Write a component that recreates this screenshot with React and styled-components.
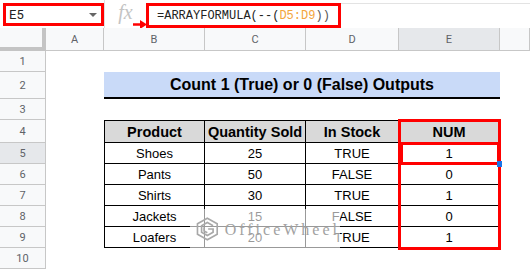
import React from "react";
import styled, { createGlobalStyle } from "styled-components";

const GlobalStyle = createGlobalStyle`
	html, body {
		margin: 0;
		background: #fff;
		font-family: "Liberation Sans", Arial, sans-serif;
		overflow: hidden;
	}
	* {
		box-sizing: border-box;
	}
`;

const Page = styled.div`
	position: relative;
	width: 530px;
	height: 270px;
`;

const TopBar = styled.div`
	display: flex;
	height: 28px;
`;

const NameBox = styled.div`
	display: flex;
	align-items: center;
	justify-content: space-between;
	margin: 3px 0 0 3px;
	width: 101px;
	height: 23px;
	padding: 0 4px 0 3px;
	border: 3px solid #f00;
	font-family: Roboto, "Liberation Sans", sans-serif;
	font-size: 13px;
	color: #222;
`;

const Caret = styled.span`
	width: 0;
	height: 0;
	border-left: 4px solid transparent;
	border-right: 4px solid transparent;
	border-top: 4px solid #666;
`;

const FxArea = styled.div`
	display: flex;
	align-items: center;
	justify-content: center;
	width: 42px;
	border-left: 1px solid #e0e0e0;
	font-family: "Liberation Serif", serif;
	font-style: italic;
	font-size: 20px;
	color: #c4c4c4;
	padding-bottom: 3px;
`;

const FormulaBox = styled.div`
	display: flex;
	align-items: center;
	margin-top: 3px;
	width: 195px;
	height: 25px;
	padding-left: 8px;
	border: 3px solid #f00;
	font-family: "Liberation Mono", "DejaVu Sans Mono", monospace;
	font-size: 12px;
	color: #222;
	white-space: pre;
`;

const Ref = styled.span`
	color: ${p => p.$color};
`;

const FormulaRest = styled.div`
	flex: 1;
	margin-top: 3px;
	border-top: 1px solid #e3e3e3;
`;

const Arrow = styled.svg`
	position: absolute;
	left: 133px;
	top: 20px;
`;

const Sheet = styled.div`
	position: relative;
`;

const SheetRow = styled.div`
	display: grid;
	grid-template-columns: 46px 58px 101px 101px 93px 101px 1fr;
	height: ${p => p.$h}px;
`;

const Corner = styled.div`
	background: #f8f9fa;
	border-right: 4px solid #c4c4c4;
	border-bottom: 4px solid #c4c4c4;
`;

const ColHead = styled.div`
	display: flex;
	align-items: center;
	justify-content: center;
	background: ${p => (p.$active ? "#e6e8eb" : "#f8f9fa")};
	border-right: 1px solid #c7c7c7;
	border-bottom: 1px solid #c7c7c7;
	font-family: Roboto, "Liberation Sans", sans-serif;
	font-size: 11px;
	color: #5f6368;
`;

const RowHead = styled(ColHead)``;

const Blank = styled.div``;

const TitleCell = styled.div`
	grid-column: 3 / span 4;
	display: flex;
	align-items: center;
	justify-content: center;
	background: #c9daf8;
	border-bottom: 2px solid #000;
	font-weight: 700;
	font-size: 16px;
	color: #000;
`;

const Cell = styled.div`
	display: flex;
	align-items: center;
	justify-content: center;
	background: ${p => (p.$head ? "#d9d9d9" : "#fff")};
	border-right: 1px solid #000;
	border-bottom: 1px solid #000;
	border-left: ${p => (p.$first ? "1px solid #000" : "none")};
	border-top: ${p => (p.$top ? "1px solid #000" : "none")};
	font-weight: ${p => (p.$head ? 700 : 400)};
	font-size: ${p => (p.$head ? "14.5px" : "13px")};
	color: #000;
`;

const Outline = styled.div`
	position: absolute;
	left: ${p => p.$x}px;
	top: ${p => p.$y}px;
	width: ${p => p.$w}px;
	height: ${p => p.$h}px;
	border: 3px solid #f00;
`;

const Handle = styled.div`
	position: absolute;
	left: 497px;
	top: 133px;
	width: 5px;
	height: 6px;
	background: #1a73e8;
`;

const Watermark = styled.div`
	position: absolute;
	left: 190px;
	top: 209px;
	width: 150px;
	height: 40px;
	display: flex;
	align-items: center;
	gap: 5px;
	padding-left: 5px;
	background: rgba(255, 255, 255, 0.6);
`;

const MarkText = styled.span`
	font-family: "Liberation Serif", serif;
	font-size: 16px;
	letter-spacing: 3px;
	color: #a2a2a2;
	padding-top: 2px;
`;

const columns = ["A", "B", "C", "D", "E"];

const data = [
	["Shoes", 25, "TRUE", 1],
	["Pants", 50, "FALSE", 0],
	["Shirts", 30, "TRUE", 1],
	["Jackets", 15, "FALSE", 0],
	["Loafers", 20, "TRUE", 1],
];

const TableRow = ({ n, values, head, top, active }) => (
	<SheetRow $h={head ? 23 : 21}>
		<RowHead $active={active}>{n}</RowHead>
		<Blank />
		{values.map((v, i) => (
			<Cell key={i} $head={head} $top={top} $first={i === 0}>
				{v}
			</Cell>
		))}
		<Blank />
	</SheetRow>
);

const EmptyRow = ({ n, h = 21 }) => (
	<SheetRow $h={h}>
		<RowHead>{n}</RowHead>
	</SheetRow>
);

const App = () => (
	<Page>
		<GlobalStyle />
		<TopBar>
			<NameBox>
				E5
				<Caret />
			</NameBox>
			<FxArea>fx</FxArea>
			<FormulaBox>
				=ARRAYFORMULA(--(<Ref $color="#f4a53c">D5:D9</Ref>
				<Ref $color="#555">))</Ref>
			</FormulaBox>
			<FormulaRest />
		</TopBar>
		<Arrow width="14" height="9" viewBox="0 0 14 9">
			<line x1="0" y1="4.5" x2="8" y2="4.5" stroke="#f00" strokeWidth="2.5" />
			<polygon points="7,0 14,4.5 7,9" fill="#f00" />
		</Arrow>

		<Sheet>
			<SheetRow $h={23}>
				<Corner />
				{columns.map(c => (
					<ColHead key={c} $active={c === "E"}>
						{c}
					</ColHead>
				))}
				<ColHead />
			</SheetRow>
			<EmptyRow n={1} />
			<SheetRow $h={27}>
				<RowHead>2</RowHead>
				<Blank />
				<TitleCell>Count 1 (True) or 0 (False) Outputs</TitleCell>
			</SheetRow>
			<EmptyRow n={3} />
			<TableRow n={4} head top values={["Product", "Quantity Sold", "In Stock", "NUM"]} />
			{data.map((row, i) => (
				<TableRow key={i} n={i + 5} values={row} active={i === 0} />
			))}
			<EmptyRow n={10} />

			<Outline $x={398} $y={91} $w={103} $h={131} />
			<Outline $x={400} $y={114} $w={100} $h={23} />
			<Handle />
		</Sheet>

		<Watermark>
			<svg width="30" height="30" viewBox="0 0 30 30" fill="none" stroke="#a8a8a8" strokeWidth="2">
				<path d="M15 2 L27 8.5 V21.5 L15 28 L3 21.5 V8.5 Z" />
				<path d="M22 11 L15 7 L8 11 V19 L15 23 L22 19 V15 H16" />
				<path d="M11 13 V17.5 L15 19.5" />
			</svg>
			<MarkText>OfficeWheel</MarkText>
		</Watermark>
	</Page>
);

export default App;
